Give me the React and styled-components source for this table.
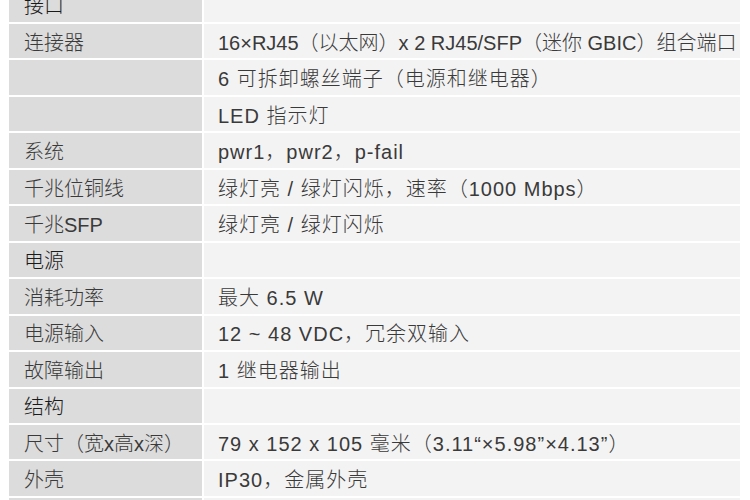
import React from "react";
import styled, { createGlobalStyle } from "styled-components";

const GlobalStyle = createGlobalStyle`
  html, body {
    margin: 0;
    padding: 0;
    background: #fff;
    overflow: hidden;
  }
  body {
    font-family: "Liberation Sans", "Noto Sans CJK SC", sans-serif;
  }
`;

const rows = [
  { label: "接口", heading: true },
  { label: "连接器", value: "16×RJ45（以太网）x 2 RJ45/SFP（迷你 GBIC）组合端口", tight: true },
  { label: "", value: "6 可拆卸螺丝端子（电源和继电器）" },
  { label: "", value: "LED 指示灯" },
  { label: "系统", value: "pwr1，pwr2，p-fail" },
  { label: "千兆位铜线", value: "绿灯亮 / 绿灯闪烁，速率（1000 Mbps）" },
  { label: "千兆SFP", value: "绿灯亮 / 绿灯闪烁" },
  { label: "电源", heading: true },
  { label: "消耗功率", value: "最大 6.5 W" },
  { label: "电源输入", value: "12 ~ 48 VDC，冗余双输入" },
  { label: "故障输出", value: "1 继电器输出" },
  { label: "结构", heading: true },
  { label: "尺寸（宽x高x深）", value: "79 x 152 x 105 毫米（3.11“×5.98”×4.13”）" },
  { label: "外壳", value: "IP30，金属外壳" },
  { label: "", value: "" },
];

const App = () => (
  <>
    <GlobalStyle />
    <Page>
      <SpecTable>
        {rows.map((row, i) => (
          <React.Fragment key={i}>
            <Label heading={row.heading ? "true" : undefined}>{row.label}</Label>
            <Value tight={row.tight ? "true" : undefined}>{row.value}</Value>
          </React.Fragment>
        ))}
      </SpecTable>
    </Page>
  </>
);

export default App;

const Page = styled.div`
  width: 750px;
  height: 500px;
  overflow: hidden;
  padding: 0 10px 0 9px;
  box-sizing: border-box;
`;

const SpecTable = styled.div`
  display: grid;
  grid-template-columns: 193px 1fr;
  grid-auto-rows: 34.46px;
  column-gap: 2px;
  row-gap: 2px;
  margin-top: -12.46px;
`;

const Cell = styled.div`
  display: flex;
  align-items: center;
  font-size: 20px;
  font-weight: 300;
  white-space: nowrap;
  color: #3a3a3a;
`;

const Label = styled(Cell)`
  background: #dcdcdc;
  padding-left: 15px;
  ${({ heading }) => heading && `color: #1a1a1a;`}
`;

const Value = styled(Cell)`
  background: #f3f3f3;
  padding-left: 14px;
  letter-spacing: ${({ tight }) => (tight ? "0" : "1px")};
`;
